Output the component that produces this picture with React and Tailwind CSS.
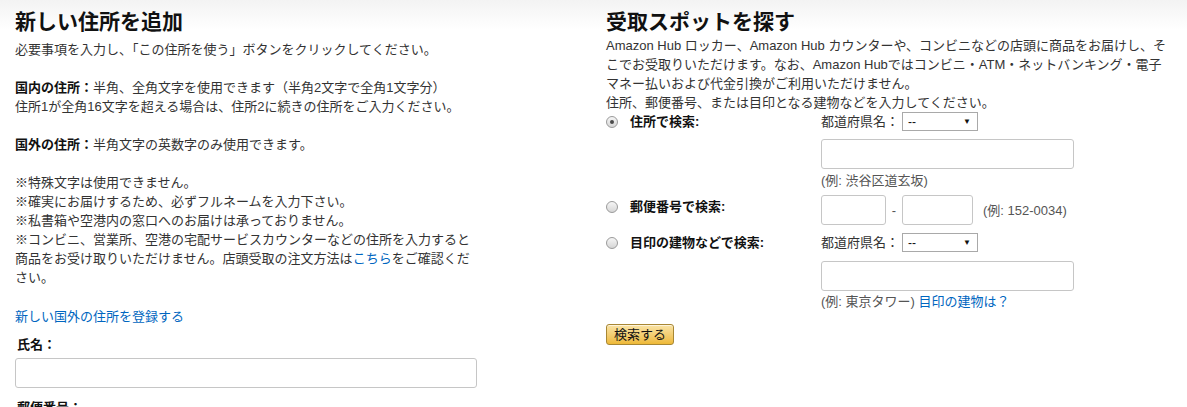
import React from "react";

function Radio({ checked }) {
  return (
    <span className="flex h-[12px] w-[12px] shrink-0 items-center justify-center rounded-full border border-[#9a9a9a] bg-gradient-to-b from-[#f6f6f6] to-[#d6d6d6]">
      {checked && <span className="h-[4px] w-[4px] rounded-full bg-[#4a4a4a]" />}
    </span>
  );
}

function Select() {
  return (
    <div className="flex h-[19px] w-[76px] items-center justify-between border border-[#a9a9a9] bg-white pl-[5px] pr-[6px] text-[12px] leading-none text-[#111]">
      <span>--</span>
      <span className="text-[8px]">▼</span>
    </div>
  );
}

function TextBox({ className }) {
  return <div className={"h-[30px] rounded-[3px] border border-[#c6c6c6] bg-white " + className} />;
}

export default function App() {
  return (
    <div className="flex h-[407px] w-[1187px] overflow-hidden bg-[linear-gradient(to_bottom,#f3f3f3,#ffffff_30px)] pl-[15px] pt-[8px] font-['Liberation_Sans','Noto_Sans_CJK_JP',sans-serif] text-[13px] leading-[19px] text-[#333]">
      {/* Left: new address form */}
      <div className="w-[462px] shrink-0">
        <h1 className="mb-[4px] text-[21px] font-bold leading-[28px] text-[#111]">新しい住所を追加</h1>
        <p>必要事項を入力し、「この住所を使う」ボタンをクリックしてください。</p>
        <p className="mt-[19px] whitespace-nowrap">
          <b className="text-[#111]">国内の住所：</b>半角、全角文字を使用できます（半角2文字で全角1文字分）
          <br />
          住所1が全角16文字を超える場合は、住所2に続きの住所をご入力ください。
        </p>
        <p className="mt-[19px]">
          <b className="text-[#111]">国外の住所：</b>半角文字の英数字のみ使用できます。
        </p>
        <p className="mt-[19px] whitespace-nowrap">
          ※特殊文字は使用できません。
          <br />
          ※確実にお届けするため、必ずフルネームを入力下さい。
          <br />
          ※私書箱や空港内の窓口へのお届けは承っておりません。
          <br />
          ※コンビニ、営業所、空港の宅配サービスカウンターなどの住所を入力すると
          <br />
          商品をお受け取りいただけません。店頭受取の注文方法は
          <a className="text-[#0066c0]">こちら</a>をご確認くだ
          <br />
          さい。
        </p>
        <p className="mt-[20px]">
          <a className="text-[#0066c0]">新しい国外の住所を登録する</a>
        </p>
        <div className="mt-[9px] pl-[2px] font-bold text-[#111]">氏名：</div>
        <TextBox className="mt-[4px] w-[462px]" />
        <div className="mt-[10px] pl-[2px] font-bold text-[#111]">郵便番号：</div>
      </div>

      {/* Right: pickup spot search */}
      <div className="ml-[129px] w-[566px] shrink-0">
        <h2 className="text-[21px] font-bold leading-[28px] text-[#111]">受取スポットを探す</h2>
        <p className="whitespace-nowrap">
          Amazon Hub ロッカー、Amazon Hub カウンターや、コンビニなどの店頭に商品をお届けし、そ
          <br />
          こでお受取りいただけます。なお、Amazon Hubではコンビニ・ATM・ネットバンキング・電子
          <br />
          マネー払いおよび代金引換がご利用いただけません。
        </p>
        <p>住所、郵便番号、または目印となる建物などを入力してください。</p>

        {/* by address */}
        <div className="flex">
          <div className="flex w-[215px] items-center gap-[12px] self-start">
            <Radio checked />
            <span className="font-bold text-[#111]">住所で検索:</span>
          </div>
          <div>
            <div className="flex items-center gap-[3px]">
              <span>都道府県名：</span>
              <Select />
            </div>
            <TextBox className="mt-[8px] w-[253px]" />
            <div className="mt-[2px] text-[#555]">(例: 渋谷区道玄坂)</div>
          </div>
        </div>

        {/* by postal code */}
        <div className="mt-[5px] flex">
          <div className="flex w-[215px] items-center gap-[12px] self-start pt-[2px]">
            <Radio />
            <span className="font-bold text-[#111]">郵便番号で検索:</span>
          </div>
          <div className="flex items-center">
            <TextBox className="w-[65px]" />
            <span className="w-[16px] text-center text-[#555]">-</span>
            <TextBox className="w-[71px]" />
            <span className="ml-[10px] text-[#555]">(例: 152-0034)</span>
          </div>
        </div>

        {/* by landmark */}
        <div className="mt-[8px] flex">
          <div className="flex w-[215px] items-center gap-[12px] self-start">
            <Radio />
            <span className="font-bold text-[#111]">目印の建物などで検索:</span>
          </div>
          <div>
            <div className="flex items-center gap-[3px]">
              <span>都道府県名：</span>
              <Select />
            </div>
            <TextBox className="mt-[9px] w-[253px]" />
            <div className="mt-[1px] text-[#555]">
              (例: 東京タワー) <a className="text-[#0066c0]">目印の建物は？</a>
            </div>
          </div>
        </div>

        <button className="mt-[13px] flex h-[21px] w-[68px] items-center justify-center rounded-[3px] border border-[#a88734] bg-gradient-to-b from-[#f9e3a4] to-[#eeb935] text-[13px] leading-none text-[#111] shadow-[inset_0_1px_0_rgba(255,255,255,0.6)]">
          検索する
        </button>
      </div>
    </div>
  );
}
